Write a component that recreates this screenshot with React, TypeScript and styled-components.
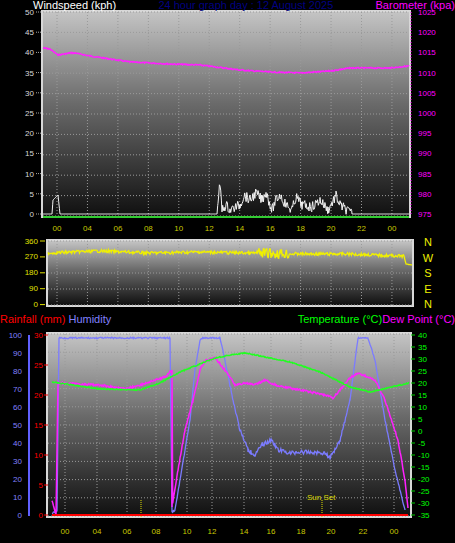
import React from "react";
import styled, { createGlobalStyle } from "styled-components";

const Global = createGlobalStyle`
  body { margin: 0; background: #000; font-family: "Liberation Sans", Arial, sans-serif; }
`;

const Page = styled.div`
  width: 455px; height: 543px; background: #000; display: flex; flex-direction: column; overflow: hidden;
`;
const TitleRow = styled.div<{ $h: number }>`
  height: ${p => p.$h}px; display: flex; align-items: flex-start; justify-content: space-between;
  font-size: 11px; line-height: 11px; white-space: nowrap; position: relative; z-index: 1;
`;
const CenterRow = styled(TitleRow)`align-items: center;`;
const Label = styled.span<{ $c: string; $ml?: number }>`
  color: ${p => p.$c}; margin-left: ${p => p.$ml ?? 0}px;
`;
const Group = styled.div`display: flex;`;
const Chart = styled.svg`display: block; flex: none;`;

let seed = 7;
const rnd = () => { seed = (seed * 9301 + 49297) % 233280; return seed / 233280; };

const interp = (pts: number[][], x: number) => {
  for (let i = 0; i < pts.length - 1; i++) {
    const [x0, y0] = pts[i], [x1, y1] = pts[i + 1];
    if (x >= x0 && x <= x1) return x1 === x0 ? y1 : y0 + ((y1 - y0) * (x - x0)) / (x1 - x0);
  }
  return pts[pts.length - 1][1];
};
const series = (pts: number[][], noise: (x: number) => number) => {
  const out: string[] = [];
  for (let i = 0; i < pts.length - 1; i++) {
    const [x0] = pts[i], [x1] = pts[i + 1];
    if (x1 === x0) { out.push(`${x0},${pts[i][1]}`, `${x1},${pts[i + 1][1]}`); continue; }
    for (let x = x0; x < x1; x += 0.7) out.push(`${x.toFixed(1)},${(interp(pts, x) + (rnd() - 0.5) * noise(x)).toFixed(1)}`);
  }
  const l = pts[pts.length - 1];
  out.push(`${l[0]},${l[1]}`);
  return out.join(" ");
};

const xTicks = ["00", "04", "06", "08", "10", "12", "14", "16", "18", "20", "22", "00"];
const topX = xTicks.map((_, i) => 57 + i * 30.45);
const botX = [65, 97, 127, 156, 187, 212, 244, 271, 301, 331, 363, 394];

const Grid: React.FC<{ x0: number; x1: number; y0: number; y1: number; id: string; rows: number; xs: number[] }> = ({ x0, x1, y0, y1, id, rows, xs }) => {
  const hs = Array.from({ length: rows + 1 }, (_, i) => y0 + ((y1 - y0) * i) / rows);
  return (
    <>
      <defs>
        <linearGradient id={id} x1="0" y1="0" x2="0" y2="1">
          <stop offset="0" stopColor="#c4c4c4" />
          <stop offset="0.45" stopColor="#6a6a6a" />
          <stop offset="1" stopColor="#101010" />
        </linearGradient>
      </defs>
      <rect x={x0 - 2} y={y0 - 2} width={x1 - x0 + 4} height={y1 - y0 + 4} fill="#d8d8d8" />
      <rect x={x0} y={y0} width={x1 - x0} height={y1 - y0} fill={`url(#${id})`} />
      {xs.map((v, i) => <line key={"v" + i} x1={v} x2={v} y1={y0} y2={y1} stroke="#9a9a9a" strokeWidth="1" strokeDasharray="1 2" />)}
      {hs.map((h, i) => <line key={"h" + i} x1={x0} x2={x1} y1={h} y2={h} stroke="#9a9a9a" strokeWidth="1" strokeDasharray="1 2" />)}
    </>
  );
};

const XLabels: React.FC<{ y: number; xs: number[] }> = ({ y, xs }) => (
  <>
    {xTicks.map((t, i) => (
      <text key={i} x={xs[i]} y={y} fill="#c8c800" fontSize="8" textAnchor="middle">{t}</text>
    ))}
  </>
);

const baro = [[43, 48], [50, 49], [58, 55], [70, 53], [75, 53], [90, 56], [130, 62], [170, 64], [200, 65], [240, 70], [270, 72], [300, 73], [330, 71], [350, 68], [390, 68], [409, 66]];
const windPts: number[][] = [[43, 214], [52, 214], [53, 200], [58, 195], [60, 214], [217, 214], [218, 200], [220, 185], [222, 210], [226, 205], [230, 210], [240, 205], [244, 195], [250, 200], [256, 193], [262, 200], [266, 192], [272, 210], [276, 200], [280, 195], [286, 205], [292, 210], [296, 197], [302, 205], [312, 207], [320, 200], [328, 210], [336, 196], [340, 205], [344, 208], [352, 214], [409, 214]];

const wdir = [[48, 253], [100, 251], [150, 253], [200, 252], [250, 253], [300, 254], [350, 254], [400, 256], [404, 256], [406, 264], [412, 265]];

const hum = [[52, 513], [57, 511], [59, 338], [170, 338], [172, 512], [175, 510], [180, 480], [190, 420], [195, 370], [200, 340], [203, 338], [220, 338], [225, 360], [233, 400], [240, 430], [248, 450], [255, 455], [262, 445], [272, 440], [278, 450], [290, 453], [300, 452], [325, 453], [330, 458], [340, 440], [350, 400], [358, 338], [368, 338], [375, 360], [385, 420], [395, 470], [405, 510]];
const dew = [[52, 500], [56, 515], [58, 383], [100, 385], [125, 389], [140, 385], [165, 377], [172, 370], [172, 507], [178, 470], [185, 430], [193, 400], [200, 370], [205, 361], [215, 358], [225, 370], [235, 385], [245, 383], [255, 385], [265, 380], [275, 385], [300, 390], [325, 395], [333, 398], [340, 390], [350, 378], [358, 373], [375, 380], [385, 400], [398, 440], [405, 480], [408, 508]];
const temp = [[52, 382], [100, 389], [140, 390], [160, 383], [180, 372], [200, 364], [215, 358], [230, 355], [245, 353], [265, 357], [290, 362], [320, 372], [350, 387], [370, 392], [409, 383]];

export default function App() {
  const baroLine = series(baro, () => 1.2);
  const windLine = series(windPts, x => (x > 217 && x < 352 ? 10 : 0));
  const dirLine = series(wdir, x => (x > 255 && x < 290 ? 10 : x < 404 ? 3 : 0));
  const humLine = series(hum, x => (x > 225 && x < 345 ? 4 : 1.5));
  const dewLine = series(dew, () => 2);
  const tempLine = series(temp, () => 1);
  const leftTop = Array.from({ length: 11 }, (_, i) => 50 - i * 5);
  const rightTop = Array.from({ length: 11 }, (_, i) => 1025 - i * 5);
  return (
    <Page>
      <Global />
      <TitleRow $h={8}>
        <Label $c="#fff" $ml={33}>Windspeed (kph)</Label>
        <Label $c="#000080">24 hour graph day : 12 August 2025</Label>
        <Label $c="#ff00ff">Barometer (kpa)</Label>
      </TitleRow>
      <Chart width={455} height={225} viewBox="0 8 455 225">
        <Grid x0={43} x1={409} y0={12} y1={216} id="g1" rows={10} xs={topX} />
        {leftTop.map((v, i) => (
          <g key={i}>
            <text x={34} y={15 + i * 20.2} fill="#d8d8d8" fontSize="8" textAnchor="end">{v}</text>
            <line x1={36} x2={41} y1={12 + i * 20.2} y2={12 + i * 20.2} stroke="#aaa" strokeDasharray="1 1" />
          </g>
        ))}
        {rightTop.map((v, i) => (
          <text key={i} x={418} y={15 + i * 20.2} fill="#ff00ff" fontSize="8">{v}</text>
        ))}
        <line x1={411} x2={411} y1={12} y2={216} stroke="#ff00ff" strokeDasharray="1 2" />
        <polyline points={windLine} fill="none" stroke="#f4f4f4" strokeWidth="1" />
        <line x1={43} x2={409} y1={217} y2={217} stroke="#3c3" strokeWidth="2" />
        <polyline points={baroLine} fill="none" stroke="#ff20ff" strokeWidth="1.5" />
        <XLabels y={231} xs={topX} />
      </Chart>
      <Chart width={455} height={80} viewBox="0 233 455 80">
        <Grid x0={48} x1={412} y0={241} y1={305} id="g2" rows={4} xs={topX} />
        {[360, 270, 180, 90, 0].map((v, i) => (
          <g key={i}>
            <text x={38} y={243.5 + i * 15.9} fill="#e0e000" fontSize="8" textAnchor="end">{v}</text>
            <line x1={40} x2={45} y1={241 + i * 15.9} y2={241 + i * 15.9} stroke="#e0e000" />
          </g>
        ))}
        {["N", "W", "S", "E", "N"].map((v, i) => (
          <text key={i} x={428} y={246 + i * 15.5} fill="#f0f000" fontSize="11" textAnchor="middle">{v}</text>
        ))}
        <polyline points={dirLine} fill="none" stroke="#f0f000" strokeWidth="1.3" />
      </Chart>
      <CenterRow $h={16}>
        <Group>
          <Label $c="#ff0000">Rainfall (mm)&nbsp;</Label>
          <Label $c="#8080ff">Humidity</Label>
        </Group>
        <Group>
          <Label $c="#00ff00">Temperature (°C)</Label>
          <Label $c="#ff00ff">Dew Point (°C)</Label>
        </Group>
      </CenterRow>
      <Chart width={455} height={217} viewBox="0 326 455 217">
        <Grid x0={48} x1={410} y0={334} y1={516} id="g3" rows={10} xs={botX} />
        <line x1={29} x2={29} y1={335} y2={516} stroke="#6060ff" strokeWidth="2" />
        {Array.from({ length: 11 }, (_, i) => (
          <text key={i} x={22} y={337.5 + i * 18} fill="#8080ff" fontSize="8" textAnchor="end">{100 - i * 10}</text>
        ))}
        {Array.from({ length: 7 }, (_, i) => (
          <g key={i}>
            <text x={43} y={337.5 + i * 30} fill="#ff0000" fontSize="8" textAnchor="end">{30 - i * 5}</text>
            <line x1={44} x2={48} y1={335 + i * 30} y2={335 + i * 30} stroke="#ff0000" />
          </g>
        ))}
        {Array.from({ length: 16 }, (_, i) => (
          <g key={i}>
            <text x={418} y={337.5 + i * 12} fill="#00ff00" fontSize="8">{40 - i * 5}</text>
            <line x1={411} x2={415} y1={335 + i * 12} y2={335 + i * 12} stroke="#00cc00" />
          </g>
        ))}
        <line x1={141} x2={141} y1={500} y2={518} stroke="#e0e000" strokeDasharray="1 1" />
        <line x1={322} x2={322} y1={500} y2={518} stroke="#e0e000" strokeDasharray="1 1" />
        <text x={307} y={500} fill="#d8d800" fontSize="8">Sun Set</text>
        <polyline points={humLine} fill="none" stroke="#7b7bff" strokeWidth="1.3" />
        <polyline points={dewLine} fill="none" stroke="#ff20ff" strokeWidth="1.5" />
        <polyline points={tempLine} fill="none" stroke="#20ff20" strokeWidth="1.5" />
        <line x1={52} x2={408} y1={515} y2={515} stroke="#ff0000" strokeWidth="2" />
        <XLabels y={534} xs={botX} />
      </Chart>
    </Page>
  );
}
